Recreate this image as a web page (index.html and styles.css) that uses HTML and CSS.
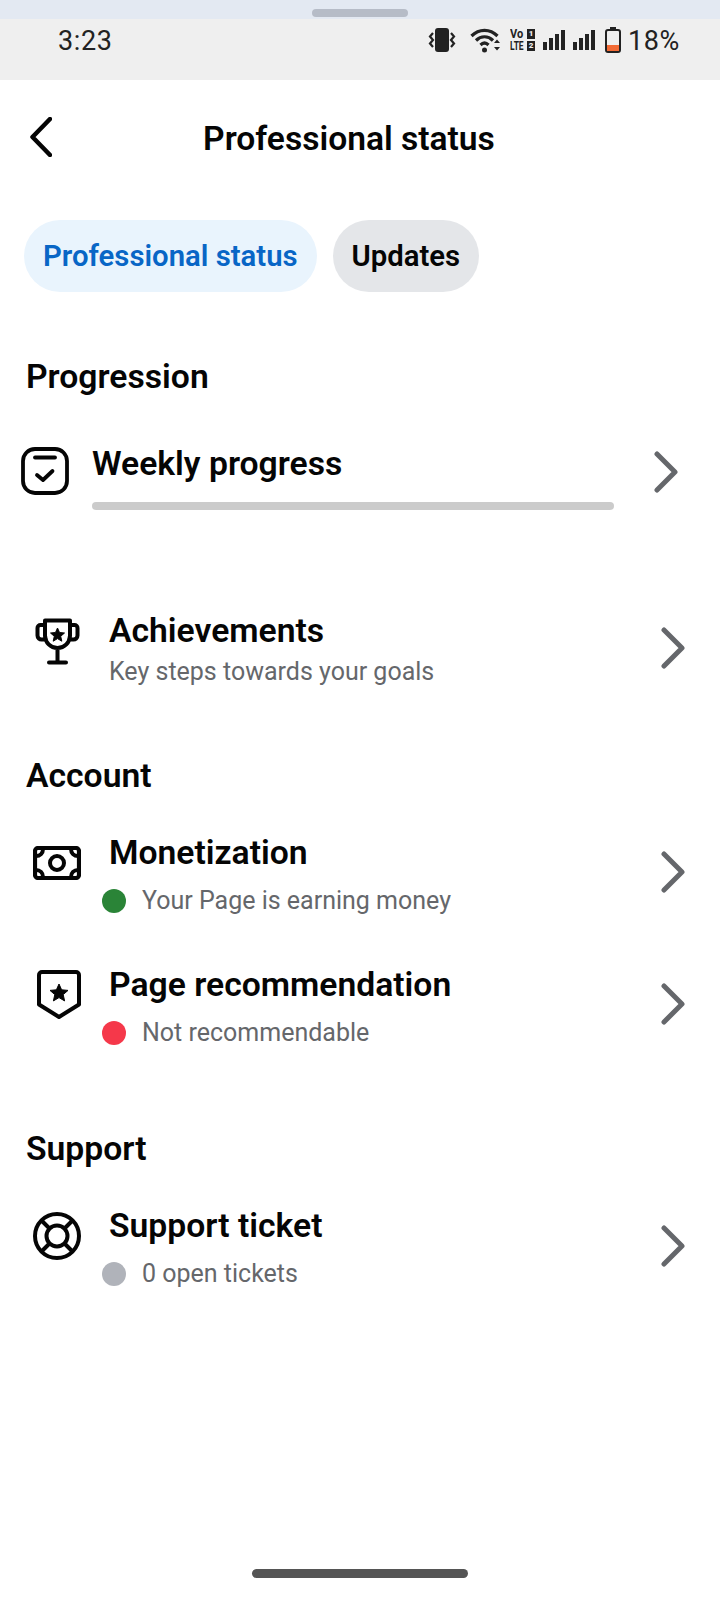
FILE: index.html
```html
<!DOCTYPE html>
<html lang="en">
<head>
<meta charset="utf-8">
<title>Professional status</title>
<link rel="stylesheet" href="styles.css">
</head>
<body>
<div class="phone">
  <div class="top-strip"><span class="handle"></span></div>
  <div class="status-bar">
    <span class="clock">3:23</span>
    <div class="status-icons">
      <svg class="si si-vibrate" width="28" height="26" viewBox="0 0 28 26"><rect x="7" y="1" width="14" height="24" rx="3" fill="#222"/><path d="M5 6 2 9.500l3 3.500-3 3.500L5 20M23 6l3 3.500-3 3.500 3 3.500-3 3.500" fill="none" stroke="#222" stroke-width="2.200"/></svg>
      <svg class="si si-wifi" width="30" height="26" viewBox="0 0 30 26"><path d="M1.500 9C9 1.500 20 1.500 27.500 9M6 13.500c5-5 12-5 17 0M10.500 18c2.500-2.500 5.500-2.500 8 0" fill="none" stroke="#222" stroke-width="3.200"/><circle cx="14.500" cy="23" r="2.500" fill="#222"/><path d="M24 16h6l-3-3.500zM24 20h6l-3 3.500z" fill="#222"/></svg>
      <div class="volte"><span class="vo">Vo</span><b>1</b><span class="lte">LTE</span><b>2</b></div>
      <svg class="si si-signal" width="22" height="22" viewBox="0 0 22 22"><path d="M0 13h4v8H0zM6 9h4v12H6zM12 5h4v16h-4zM18 1h4v20h-4z" fill="#222"/></svg>
      <svg class="si si-signal-last" width="22" height="22" viewBox="0 0 22 22"><path d="M0 13h4v8H0zM6 9h4v12H6zM12 5h4v16h-4zM18 1h4v20h-4z" fill="#222"/></svg>
      <svg class="si si-battery" width="16" height="26" viewBox="0 0 16 26"><path d="M5 0h6v3H5z" fill="#222"/><rect x="1" y="3" width="14" height="22" rx="2" fill="#efefef" stroke="#222" stroke-width="2"/><path d="M2 18h12v6H2z" fill="#f26a35"/></svg>
      <span class="battery">18%</span>
    </div>
  </div>

  <header class="title-bar">
    <svg class="back" width="22" height="40" viewBox="0 0 22 40"><path d="M20 2 2.500 20 20 38" fill="none" stroke="#050505" stroke-width="4.500" stroke-linecap="round" stroke-linejoin="round"/></svg>
    <h1>Professional status</h1>
  </header>

  <nav class="chips">
    <span class="chip chip-active">Professional status</span>
    <span class="chip">Updates</span>
  </nav>

  <section class="section section-progress">
    <h2>Progression</h2>
    <div class="weekly">
      <svg class="weekly-icon" width="48" height="48" viewBox="0 0 48 48"><rect x="2" y="2" width="44" height="44" rx="12" fill="none" stroke="#050505" stroke-width="3.800"/><path d="M14 10.500h20" stroke="#050505" stroke-width="3.800" stroke-linecap="round"/><path d="M16 28l6 5 9.500-9" fill="none" stroke="#050505" stroke-width="3.800" stroke-linecap="round" stroke-linejoin="round"/></svg>
      <div class="weekly-body">
        <div class="row-title">Weekly progress</div>
        <div class="track"></div>
      </div>
      <svg class="chev" width="24" height="42" viewBox="0 0 24 42"><path d="M3 3l18 18L3 39" fill="none" stroke="#65676b" stroke-width="5" stroke-linecap="round" stroke-linejoin="round"/></svg>
    </div>
    <div class="row row-achievements">
      <svg class="row-icon" width="48" height="48" viewBox="0 0 48 48"><path d="M11 3.500h25v15a12.500 12.500 0 0 1-25 0zM11 8H6.500a3 3 0 0 0-3 3v7.500c0 2.500 2 4 4 4H12M36 8h4.500a3 3 0 0 1 3 3v7.500c0 2.500-2 4-4 4H35M23.500 32v13M15 45.500h17" fill="none" stroke="#050505" stroke-width="4" stroke-linecap="round" stroke-linejoin="round"/><path d="m23.500 11 2 4.500 5 .5-3.800 3.300 1.100 4.900-4.300-2.600-4.300 2.600 1.100-4.900-3.800-3.300 5-.5z" fill="#050505" stroke="#050505" stroke-linejoin="round"/></svg>
      <div class="row-body">
        <div class="row-title">Achievements</div>
        <div class="row-sub">Key steps towards your goals</div>
      </div>
      <svg class="chev" width="24" height="42" viewBox="0 0 24 42"><path d="M3 3l18 18L3 39" fill="none" stroke="#65676b" stroke-width="5" stroke-linecap="round" stroke-linejoin="round"/></svg>
    </div>
  </section>

  <section class="section section-account">
    <h2>Account</h2>
    <div class="row row-money">
      <svg class="row-icon" width="48" height="34" viewBox="0 0 48 34"><rect x="2" y="2" width="44" height="30" rx="3" fill="none" stroke="#050505" stroke-width="4.200"/><circle cx="24" cy="17" r="7" fill="none" stroke="#050505" stroke-width="4"/><path d="M3 10c4 0 7-3 7-7M45 10c-4 0-7-3-7-7M3 24c4 0 7 3 7 7M45 24c-4 0-7 3-7 7" fill="none" stroke="#050505" stroke-width="4"/></svg>
      <div class="row-body">
        <div class="row-title">Monetization</div>
        <div class="row-sub with-dot"><span class="dot dot-green"></span>Your Page is earning money</div>
      </div>
      <svg class="chev" width="24" height="42" viewBox="0 0 24 42"><path d="M3 3l18 18L3 39" fill="none" stroke="#65676b" stroke-width="5" stroke-linecap="round" stroke-linejoin="round"/></svg>
    </div>
    <div class="row row-recommend">
      <svg class="row-icon" width="44" height="50" viewBox="0 0 44 50"><path d="M5 2h34a3 3 0 0 1 3 3v29.500L22 47 2 34.500V5a3 3 0 0 1 3-3z" fill="none" stroke="#050505" stroke-width="4" stroke-linejoin="round"/><path d="m22 14 2.600 5.800 6.400.6-4.800 4.200 1.400 6.300-5.600-3.300-5.600 3.300 1.400-6.300-4.800-4.200 6.400-.6z" fill="#050505" stroke="#050505" stroke-linejoin="round"/></svg>
      <div class="row-body">
        <div class="row-title">Page recommendation</div>
        <div class="row-sub with-dot"><span class="dot dot-red"></span>Not recommendable</div>
      </div>
      <svg class="chev" width="24" height="42" viewBox="0 0 24 42"><path d="M3 3l18 18L3 39" fill="none" stroke="#65676b" stroke-width="5" stroke-linecap="round" stroke-linejoin="round"/></svg>
    </div>
  </section>

  <section class="section section-support">
    <h2>Support</h2>
    <div class="row row-ticket">
      <svg class="row-icon" width="48" height="48" viewBox="0 0 48 48"><circle cx="24" cy="24" r="22" fill="none" stroke="#050505" stroke-width="4"/><circle cx="24" cy="24" r="10.500" fill="none" stroke="#050505" stroke-width="4"/><path d="M9 9l7.500 7.500M39 9l-7.500 7.500M9 39l7.500-7.500M39 39l-7.500-7.500" stroke="#050505" stroke-width="4"/></svg>
      <div class="row-body">
        <div class="row-title">Support ticket</div>
        <div class="row-sub with-dot"><span class="dot dot-grey"></span>0 open tickets</div>
      </div>
      <svg class="chev" width="24" height="42" viewBox="0 0 24 42"><path d="M3 3l18 18L3 39" fill="none" stroke="#65676b" stroke-width="5" stroke-linecap="round" stroke-linejoin="round"/></svg>
    </div>
  </section>

  <div class="home-bar"><span></span></div>
</div>
</body>
</html>
```

FILE: styles.css
```css
* { box-sizing: border-box; }
html, body { margin: 0; padding: 0; background: #fff; }
body { font-family: Roboto, "Liberation Sans", sans-serif; color: #050505; }

.phone { position: relative; width: 720px; height: 1600px; overflow: hidden; background: #fff; }

.top-strip { height: 19px; background: #e3e9f2; display: flex; justify-content: center; padding-top: 9px; }
.handle { width: 96px; height: 8px; border-radius: 4px; background: #b6bcc7; }

/* Android status bar */
.status-bar { height: 61px; background: #efefef; display: flex; justify-content: space-between; align-items: flex-start; padding: 6px 40px 0 58px; color: #222; }
.clock { padding-top: 1px; font-size: 27px; line-height: 30px; letter-spacing: .6px; }
.status-icons { display: flex; align-items: center; height: 30px; }
.si { display: block; }
.si-vibrate { margin-right: 14px; }
.si-wifi { margin-right: 10px; }
.si-signal { margin-right: 8px; }
.si-signal-last { margin-right: 10px; }
.si-battery { margin-right: 7px; }
.volte { display: grid; grid-template-columns: 17px 8px; grid-auto-rows: 10px; row-gap: 2px; width: 25px; margin-right: 8px; font-size: 13px; line-height: 10px; font-weight: 700; color: #222; }
.volte span { display: block; width: 24px; transform-origin: left center; white-space: nowrap; }
.vo { transform: scaleX(.85); }
.lte { transform: scaleX(.65); }
.volte b { display: block; height: 10px; width: 8px; background: #222; color: #efefef; font-size: 8px; line-height: 10px; text-align: center; }
.battery { padding-top: 2px; font-size: 27px; line-height: 30px; letter-spacing: .6px; }

.title-bar { position: relative; height: 116px; padding: 2px 22px 0 0; display: flex; align-items: center; justify-content: center; }
.title-bar h1 { margin: 0; font-size: 33.600px; line-height: 40px; font-weight: 600; }
.back { position: absolute; left: 30px; top: 37px; }

.chips { display: flex; gap: 16px; padding: 24px 24px 0; height: 96px; }
.chip { height: 72px; padding: 0 19px; border-radius: 36px; background: #e4e6e9; display: flex; align-items: center; font-size: 29.300px; font-weight: 600; color: #050505; }
.chip-active { background: #e9f4fd; color: #0866c6; }

.section { padding: 0 26px; }
.section h2 { margin: 0 0 -2px; font-size: 33.700px; line-height: 42px; font-weight: 600; }
.section-progress { padding-top: 64px; }
.section-account { padding-top: 67px; }
.section-support { padding-top: 73px; }

.weekly { position: relative; margin-top: 47px; height: 76px; padding-left: 66px; }
.weekly-icon { position: absolute; left: -5px; top: 4px; }
.weekly-body { width: 522px; }
.track { height: 8px; margin-top: 19px; border-radius: 4px; background: #cbcbcb; }
.weekly .chev { right: 16px; top: 8px; }

.row { position: relative; display: flex; align-items: flex-start; padding-left: 83px; }
.row-icon { position: absolute; }
.row-body { flex: 1; }
.row-title { margin-bottom: -2px; font-size: 33.700px; line-height: 42px; font-weight: 600; }
.row-sub { margin-top: 5px; font-size: 25px; line-height: 34px; color: #65676b; }
.with-dot { display: flex; align-items: center; margin-left: -7px; margin-top: 12px; }
.dot { width: 24px; height: 24px; border-radius: 50%; margin-right: 16px; flex: none; }
.dot-green { background: #2a8437; }
.dot-red { background: #f5384a; }
.dot-grey { background: #b0b3ba; }
.chev { position: absolute; right: 9px; top: 19px; }

.row-achievements { margin-top: 91px; height: 78px; }
.row-achievements .row-icon { left: 8px; top: 7px; }
.row-achievements .chev { top: 17px; }

.row-money { margin-top: 37px; height: 91px; }
.row-money .row-icon { left: 7px; top: 14px; }

.row-recommend { margin-top: 41px; height: 91px; }
.row-recommend .row-icon { left: 11px; top: 6px; }

.row-ticket { margin-top: 37px; height: 91px; }
.row-ticket .row-icon { left: 7px; top: 7px; }
.row-ticket .chev { top: 20px; }

.home-bar { position: absolute; left: 0; right: 0; bottom: 22px; display: flex; justify-content: center; }
.home-bar span { width: 216px; height: 9px; border-radius: 5px; background: #555; }
```
